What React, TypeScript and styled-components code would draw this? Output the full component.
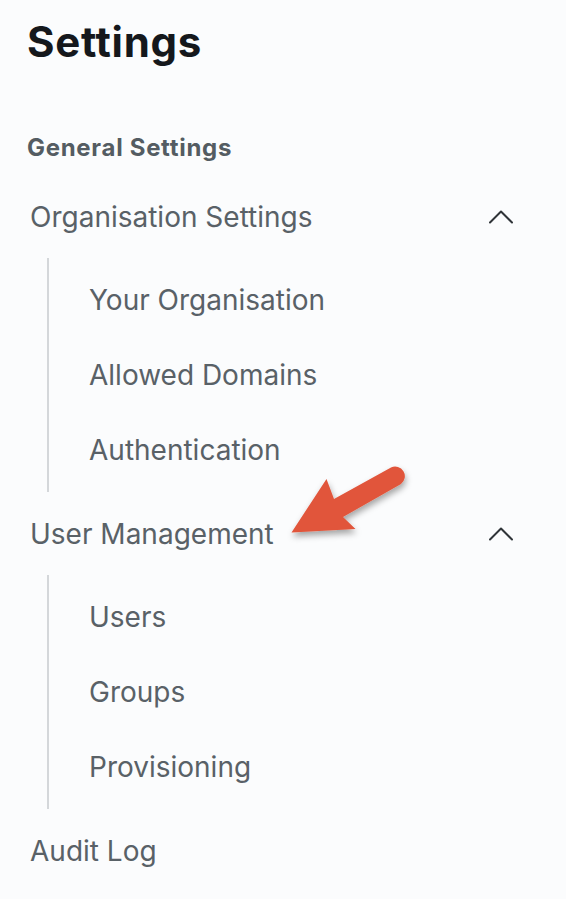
import React from 'react';
import styled, { createGlobalStyle } from 'styled-components';

const GlobalStyle = createGlobalStyle`
  html, body {
    margin: 0;
    padding: 0;
    background: #fbfcfd;
  }
  body {
    font-family: Inter, "Liberation Sans", Arial, sans-serif;
  }
`;

const Page = styled.div`
  position: relative;
  width: 566px;
  min-height: 899px;
  box-sizing: border-box;
  padding: 18px 53px 0 27px;
`;

const Title = styled.h1`
  margin: 0;
  font-size: 42px;
  line-height: 48px;
  font-weight: 700;
  color: #15181c;
  letter-spacing: 0.7px;
`;

const SectionLabel = styled.h2`
  margin: 67px 0 12px;
  font-size: 24px;
  line-height: 30px;
  font-weight: 700;
  color: #545c62;
  letter-spacing: 0.7px;
`;

const Nav = styled.nav`
  display: flex;
  flex-direction: column;
  padding-left: 3px;
`;

const GroupHeader = styled.div`
  display: flex;
  align-items: center;
  justify-content: space-between;
  height: 83px;
  font-size: 28px;
  color: #596167;
`;

const SubList = styled.ul`
  list-style: none;
  margin: 0 0 0 17px;
  padding: 4.5px 0;
  border-left: 2px solid #d4d7da;
`;

const SubItem = styled.li`
  display: flex;
  align-items: center;
  height: 75px;
  padding-left: 40px;
  font-size: 28px;
  color: #596167;
`;

const Chevron = styled.svg`
  width: 24px;
  height: 14px;
  flex: none;
`;

const Arrow = styled.svg`
  position: absolute;
  left: 280px;
  top: 455px;
  width: 135px;
  height: 95px;
  overflow: visible;
`;

function ChevronUp() {
  return (
    <Chevron viewBox="0 0 24 14">
      <path
        d="M1 12.5 L12 1.5 L23 12.5"
        fill="none"
        stroke="#2f3438"
        strokeWidth="2"
        strokeLinecap="round"
        strokeLinejoin="round"
      />
    </Chevron>
  );
}

const groups = [
  {
    title: 'Organisation Settings',
    items: ['Your Organisation', 'Allowed Domains', 'Authentication'],
  },
  {
    title: 'User Management',
    items: ['Users', 'Groups', 'Provisioning'],
  },
];

export default function App() {
  return (
    <Page>
      <GlobalStyle />
      <Title>Settings</Title>
      <SectionLabel>General Settings</SectionLabel>
      <Nav>
        {groups.map((g) => (
          <React.Fragment key={g.title}>
            <GroupHeader>
              <span>{g.title}</span>
              <ChevronUp />
            </GroupHeader>
            <SubList>
              {g.items.map((item) => (
                <SubItem key={item}>{item}</SubItem>
              ))}
            </SubList>
          </React.Fragment>
        ))}
        <GroupHeader>
          <span>Audit Log</span>
        </GroupHeader>
      </Nav>

      <Arrow viewBox="0 0 135 95">
        <defs>
          <filter id="arrowShadow" x="-30%" y="-30%" width="160%" height="170%">
            <feDropShadow dx="1" dy="4" stdDeviation="3" floodColor="#000" floodOpacity="0.35" />
          </filter>
        </defs>
        <path
          d="M11.5 77.5 L46.5 24 L54 44 L111 12.5 A9.7 9.7 0 0 1 121 29 L63 62 L75.5 74 Z"
          fill="#e1553a"
          filter="url(#arrowShadow)"
        />
      </Arrow>
    </Page>
  );
}
